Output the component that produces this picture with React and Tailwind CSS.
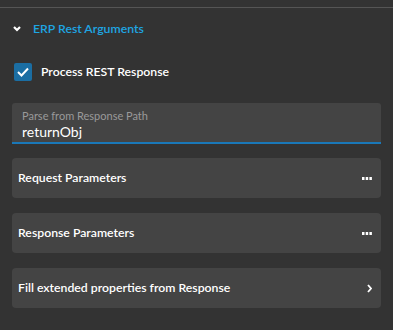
import React, { useState } from "react";

function Dots() {
    return (
        <svg width="10" height="3" viewBox="0 0 10 3" fill="white">
            <rect x="0" y="0" width="2.5" height="3" />
            <rect x="3.7" y="0" width="2.5" height="3" />
            <rect x="7.4" y="0" width="2.5" height="3" />
        </svg>
    );
}

function Chevron() {
    return (
        <svg width="5" height="9" viewBox="0 0 5 9" fill="none" stroke="white" strokeWidth="1.8">
            <path d="M1 1l3 3.5L1 8" />
        </svg>
    );
}

function Row({ label, icon }) {
    return (
        <div className="h-10 rounded-[4px] bg-[#444444] flex items-center justify-between pl-[6px] pr-[9px]">
            <span className="text-[12.25px] text-white font-semibold">{label}</span>
            {icon}
        </div>
    );
}

export default function App() {
    const [checked, setChecked] = useState(true);

    return (
        <div className="w-[393px] h-[330px] bg-[#333333] pt-[7px] font-['Lato',sans-serif] overflow-hidden">
            <div className="h-px bg-[#555555]" />

            <div className="flex items-center gap-[12px] pl-[13px] mt-[15px] h-[12px]">
                <svg width="8" height="6" viewBox="0 0 8 6" fill="none" stroke="white" strokeWidth="2.2">
                    <path d="M1 1l3 3 3-3" />
                </svg>
                <span className="text-[12.25px] text-[#1ea6e3] font-semibold">ERP Rest Arguments</span>
            </div>

            <label className="flex items-center gap-[9px] pl-[14px] mt-[28px] cursor-pointer">
                <span
                    className="w-[18px] h-[18px] rounded-[2px] bg-[#1b6ea3] flex items-center justify-center"
                    onClick={() => setChecked(!checked)}
                >
                    {checked && (
                        <svg width="12" height="10" viewBox="0 0 12 10" fill="none" stroke="white" strokeWidth="2">
                            <path d="M1 5l3.5 3.5L11 1.5" />
                        </svg>
                    )}
                </span>
                <span className="text-[12.25px] text-white font-semibold">Process REST Response</span>
            </label>

            <div className="px-[12px] mt-[22px] flex flex-col gap-[14px]">
                <div className="h-[41px] bg-[#444444] border-b-2 border-[#1a78b8] rounded-t-[3px] px-[10px] pt-[6px]">
                    <div className="text-[11px] text-[#9a9a9a] leading-[14px]">Parse from Response Path</div>
                    <div className="text-[14px] text-white leading-[18px]">returnObj</div>
                </div>

                <div className="flex flex-col gap-[15px]">
                    <Row label="Request Parameters" icon={<Dots />} />
                    <Row label="Response Parameters" icon={<Dots />} />
                    <Row label="Fill extended properties from Response" icon={<Chevron />} />
                </div>
            </div>
        </div>
    );
}
